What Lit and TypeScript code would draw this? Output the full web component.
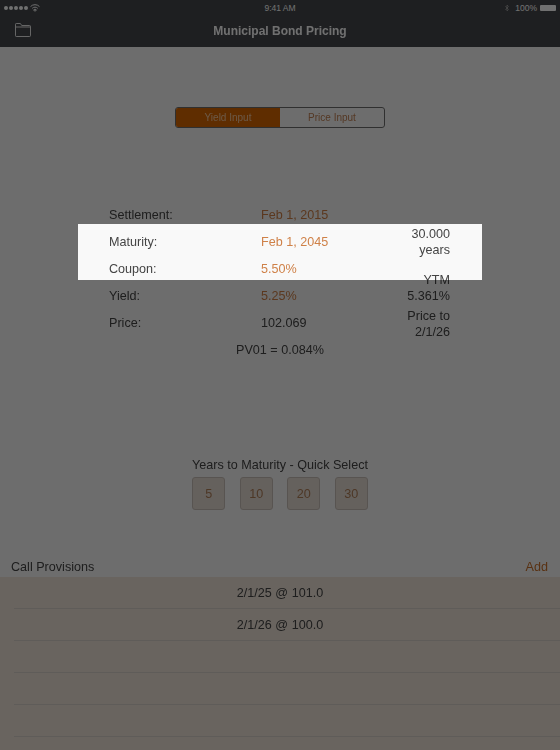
import { LitElement, html, css } from "lit";
import { customElement } from "lit/decorators.js";

@customElement("app-root")
export class AppRoot extends LitElement {
  static styles = css`
    :host { display: block; width: 560px; height: 750px; overflow: hidden; }
    .page {
      position: relative; width: 560px; height: 750px; overflow: hidden;
      background: #f9f9f9; color: #444;
      font-family: "Liberation Sans", Arial, sans-serif; font-size: 12.6px;
      display: flex; flex-direction: column;
    }
    .content { display: flex; flex-direction: column; flex: 1; filter: blur(0.5px); }
    .head { height: 47px; background: #44474c; color: #fff; flex: none; display: flex; flex-direction: column; }
    .status { height: 16px; display: grid; grid-template-columns: 1fr auto 1fr; align-items: center; padding: 0 4px; font-size: 8.5px; }
    .status-left { display: flex; align-items: center; gap: 2px; }
    .dots { display: flex; gap: 1px; }
    .dots i { width: 4px; height: 4px; border-radius: 50%; background: #fff; }
    .status-right { display: flex; justify-content: flex-end; align-items: center; gap: 3px; }
    .status-right svg { margin-right: 3px; }
    .batt { width: 16px; height: 6px; background: #fff; border-radius: 1px; }
    .nav { flex: 1; display: grid; grid-template-columns: 1fr auto 1fr; align-items: center; padding: 0 15px 2px 15px; }
    .nav svg { display: block; margin-top: -2px; }
    .title { font-size: 12px; font-weight: 700; color: #fff; }
    .seg-wrap { display: flex; justify-content: center; padding-top: 60px; }
    .seg { display: flex; width: 210px; height: 21px; box-sizing: border-box; border: 1px solid #6e6e6e; border-radius: 3px; overflow: hidden; font-size: 10px; }
    .seg div { flex: 1; display: flex; align-items: center; justify-content: center; color: #bf7f52; }
    .seg .on { background: #d96800; color: #f5c9a0; flex: none; width: 104px; }
    .form { display: grid; grid-template-columns: 1fr auto; margin: 73px 110px 0 109px; }
    .rows { display: flex; flex-direction: column; }
    .row { height: 27px; display: grid; grid-template-columns: 152px 1fr; align-items: center; }
    .val { color: #cf8148; }
    .right { display: flex; flex-direction: column; text-align: right; line-height: 16px; padding-top: 25px; }
    .right .b1 { margin-bottom: 14px; }
    .right .b2 { margin-bottom: 4px; }
    .pv { text-align: center; line-height: 27px; margin: -3px -110px 0 -109px; }
    .quick { display: flex; flex-direction: column; align-items: center; margin-top: 93px; }
    .quick .q-title { line-height: 16px; }
    .btns { display: flex; gap: 14.5px; margin-top: 4px; }
    .btn { width: 33px; height: 33px; box-sizing: border-box; border: 1px solid #c8c0b8; border-radius: 3px; background: #e6dcd3; color: #b07f58; display: flex; align-items: center; justify-content: center; }
    .calls-head { display: flex; justify-content: space-between; align-items: center; padding: 0 12px 0 11px; margin-top: 46px; height: 21px; }
    .add { color: #c9702a; }
    .table { flex: 1; background: #eee3d8; }
    .t-row { height: 32px; box-sizing: border-box; border-bottom: 1px solid #d9d2cb; margin-left: 14px; display: flex; align-items: center; justify-content: center; padding-right: 14px; }
    .spot { position: absolute; left: 78px; top: 224px; width: 404px; height: 56px; box-shadow: 0 0 0 1200px rgba(0,0,0,0.56); pointer-events: none; }
  `;

  render() {
    const rows = [
      ["Settlement:", "Feb 1, 2015", true],
      ["Maturity:", "Feb 1, 2045", true],
      ["Coupon:", "5.50%", true],
      ["Yield:", "5.25%", true],
      ["Price:", "102.069", false],
    ] as const;
    return html`
      <div class="page">
        <div class="content">
          <div class="head">
            <div class="status">
              <div class="status-left">
                <span class="dots"><i></i><i></i><i></i><i></i><i></i></span>
                <svg width="10" height="8" viewBox="0 0 9 7"><path d="M0.5 2.2a5.6 5.6 0 0 1 8 0M2 3.8a3.5 3.5 0 0 1 5 0M4.5 6.5L3.2 5.2a1.8 1.8 0 0 1 2.6 0z" fill="none" stroke="#fff" stroke-width=".9"/></svg>
              </div>
              <div>9:41 AM</div>
              <div class="status-right">
                <svg width="4" height="8" viewBox="0 0 4 8"><path d="M0.4 2l3 3.6L2 7V1l1.4 1.4L0.4 6" fill="none" stroke="#bbb" stroke-width=".6"/></svg>
                <span>100%</span><span class="batt"></span>
              </div>
            </div>
            <div class="nav">
              <svg width="16" height="14" viewBox="0 0 16 14"><path d="M.5 3V1.2C.5.8.8.5 1.2.5h4.2l1.3 2h8c.4 0 .8.3.8.7v9.6c0 .4-.4.7-.8.7H1.2c-.4 0-.7-.3-.7-.7zM.5 4h15" fill="none" stroke="#e8e8e8" stroke-width="1"/></svg>
              <div class="title">Municipal Bond Pricing</div>
              <div></div>
            </div>
          </div>
          <div class="seg-wrap">
            <div class="seg"><div class="on">Yield Input</div><div>Price Input</div></div>
          </div>
          <div class="form">
            <div class="rows">
              ${rows.map(([l, v, accent]) => html`<div class="row"><span>${l}</span><span class=${accent ? "val" : ""}>${v}</span></div>`)}
            </div>
            <div class="right">
              <div class="b1">30.000<br />years</div>
              <div class="b2">YTM<br />5.361%</div>
              <div>Price to<br />2/1/26</div>
            </div>
            <div class="pv" style="grid-column: 1 / -1">PV01 = 0.084%</div>
          </div>
          <div class="quick">
            <div class="q-title">Years to Maturity - Quick Select</div>
            <div class="btns">${["5", "10", "20", "30"].map((n) => html`<div class="btn">${n}</div>`)}</div>
          </div>
          <div class="calls-head"><span>Call Provisions</span><span class="add">Add</span></div>
          <div class="table">
            <div class="t-row">2/1/25 @ 101.0</div>
            <div class="t-row">2/1/26 @ 100.0</div>
            <div class="t-row"></div>
            <div class="t-row"></div>
            <div class="t-row"></div>
          </div>
        </div>
        <div class="spot"></div>
      </div>
    `;
  }
}
